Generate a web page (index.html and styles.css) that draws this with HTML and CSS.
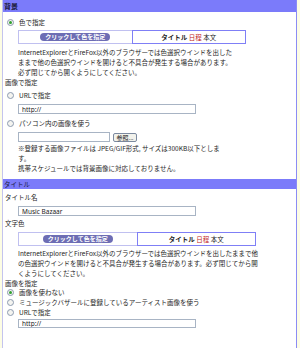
FILE: index.html
```html
<!DOCTYPE html>
<html lang="ja">
<head>
  <meta charset="UTF-8" />
  <title>デザイン設定</title>
  <link rel="stylesheet" href="styles.css">
</head>
<body>

<div class="panel">
  <div class="sec-head">背景</div>

  <div class="opt opt-top"><span class="radio on"></span>色で指定</div>
  <div class="indent">
    <div class="color-box">
      <div class="cell"><span class="pick">クリックして色を指定</span></div>
      <div class="cell sample"><b>タイトル</b>&nbsp;<span class="red">日程</span>&nbsp;本文</div>
    </div>
    <p class="note">InternetExplorerとFireFox以外のブラウザーでは色選択ウインドを出した<br>ままで他の色選択ウインドを開けると不具合が発生する場合があります。<br>必ず閉じてから開くようにしてください。</p>
  </div>

  <div class="label">画像で指定</div>
  <div class="opt opt-gap"><span class="radio"></span>URLで指定</div>
  <div class="indent">
    <input type="text" class="field" value="http://">
  </div>
  <div class="opt opt-gap2"><span class="radio"></span>パソコン内の画像を使う</div>
  <div class="indent file-row">
    <input type="text" class="field file-field" value="">
    <button class="browse">参照...</button>
  </div>
  <div class="indent">
    <p class="note note-small">※登録する画像ファイルは JPEG/GIF形式, サイズは300KB以下としま<br>す。<br>携帯スケジュールでは背景画像に対応しておりません。</p>
  </div>

  <div class="sec-head sec-head-2">タイトル</div>
  <div class="label label-top">タイトル名</div>
  <div class="indent">
    <input type="text" class="field field-gap" value="Music Bazaar">
  </div>
  <div class="label label-color">文字色</div>
  <div class="indent">
    <div class="color-box color-box-wide">
      <div class="cell"><span class="pick">クリックして色を指定</span></div>
      <div class="cell sample"><b>タイトル</b>&nbsp;<span class="red">日程</span>&nbsp;本文</div>
    </div>
    <p class="note note-tight">InternetExplorerとFireFox以外のブラウザーでは色選択ウインドを出したままで他<br>の色選択ウインドを開けると不具合が発生する場合があります。必ず閉じてから開<br>くようにしてください。</p>
  </div>

  <div class="label label-short">画像を指定</div>
  <div class="opt"><span class="radio on"></span>画像を使わない</div>
  <div class="opt"><span class="radio"></span>ミュージックバザールに登録しているアーティスト画像を使う</div>
  <div class="opt"><span class="radio"></span>URLで指定</div>
  <div class="indent">
    <input type="text" class="field field-last" value="http://">
  </div>
</div>

</body>
</html>
```

FILE: styles.css
```css
* {
  box-sizing: border-box;
}

body {
  margin: 0;
  background: #fdfde4;
  font-family: "Noto Sans CJK JP", "Noto Sans", sans-serif;
  font-size: 6.5px;
  color: #1e1e1e;
}

.panel {
  margin: 0 3px 0 2px;
  height: 348px;
  background: #fff;
  border-left: 1px solid #c4c4ee;
  border-right: 1px solid #8c8cf4;
  overflow: hidden;
}

.sec-head {
  height: 12px;
  line-height: 12px;
  padding-left: 1px;
  background: #7b7bfa;
  color: #1a1a3a;
  font-size: 7px;
  font-weight: bold;
}

.sec-head-2 {
  height: 10px;
  line-height: 10px;
  margin-top: 6px;
  font-size: 6.5px;
  font-weight: normal;
}

.opt,
.label {
  height: 10px;
  line-height: 10px;
  white-space: nowrap;
  display: flex;
  align-items: center;
}

.label {
  padding-left: 2px;
}

.opt-top {
  margin-top: 5px;
}

.opt-gap {
  margin-top: 3px;
}

.opt-gap2 {
  margin-top: 4px;
}

.label-top {
  margin-top: 3px;
}

.label-color {
  margin-top: 2px;
}

.label-short {
  height: 9px;
}

.radio {
  width: 7px;
  height: 7px;
  margin: 0 5px 0 4px;
  border: 1px solid #8d9bb0;
  border-radius: 50%;
  background: #f4f4f0;
  display: inline-flex;
  align-items: center;
  justify-content: center;
  flex-shrink: 0;
}

.radio.on::after {
  content: "";
  width: 3px;
  height: 3px;
  border-radius: 50%;
  background: #30a030;
}

.indent {
  margin-left: 15px;
}

.color-box {
  margin-top: 3px;
  width: 228px;
  height: 14px;
  display: flex;
  border: 1px solid #c0c0f0;
}

.indent .color-box-wide {
  width: 238px;
  margin-top: 4px;
}

.cell {
  flex: 1;
  display: flex;
  align-items: center;
  justify-content: center;
}

.sample {
  border: 1px solid #7f7ff6;
  margin: -1px -1px -1px 0;
}

.pick {
  width: 70px;
  height: 8px;
  line-height: 8px;
  border-radius: 4px;
  background: #6d6db4;
  color: #fff;
  font-size: 6px;
  font-weight: bold;
  text-align: center;
}

.red {
  color: #c01818;
}

.note {
  margin: 3px 0 0;
  line-height: 10px;
  white-space: nowrap;
}

.note-small {
  margin-top: 1px;
}

.note-tight {
  margin-top: 2px;
}

.field {
  display: block;
  margin: 4px 0 0;
  width: 178px;
  height: 10px;
  padding: 0 3px;
  border: 1px solid #a8b4c4;
  font-family: "Noto Sans", sans-serif;
  font-size: 6.5px;
  color: #222;
  background: #fff;
}

.field-last {
  margin-top: 2px;
  height: 9px;
}

.file-row {
  display: flex;
  align-items: center;
  gap: 3px;
  margin-top: 4px;
  height: 10px;
}

.file-field {
  margin: 0;
  width: 92px;
}

.browse {
  width: 24px;
  height: 9px;
  padding: 0;
  border: 1px solid #7c8aa0;
  border-radius: 2px;
  background: #f2f2ec;
  font-family: "Noto Sans CJK JP", sans-serif;
  font-size: 6px;
  line-height: 7px;
  color: #222;
}
```
